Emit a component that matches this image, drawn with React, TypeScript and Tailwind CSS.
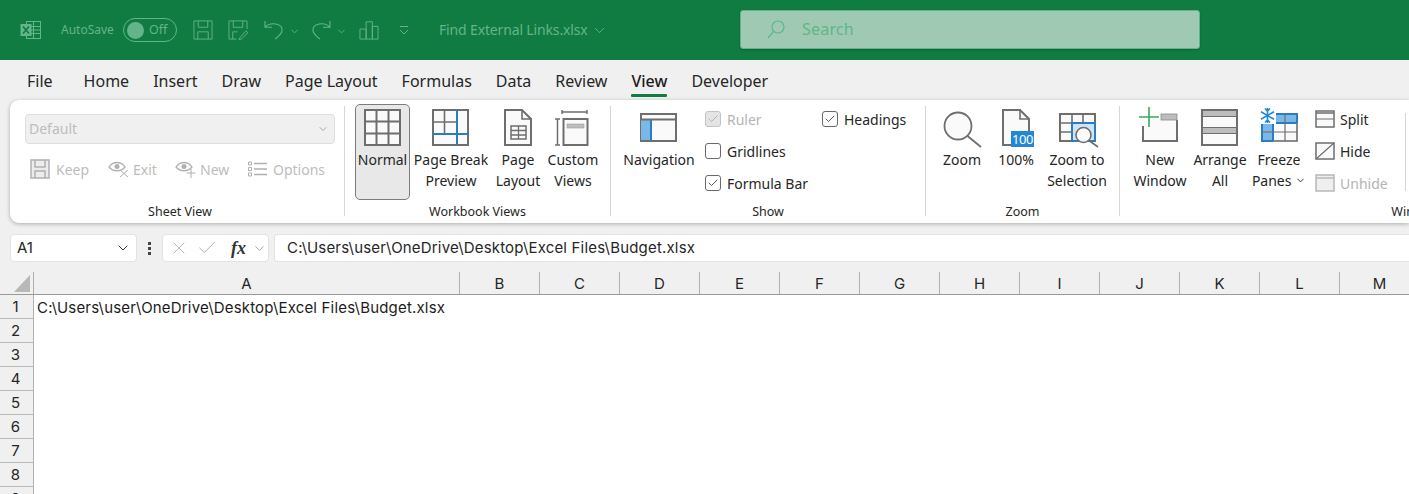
import React from "react";
import { ChevronDown, Check, X } from "lucide-react";

const G = "#6e6e6e";
const F = "#fafafa";
const B = "#2b7cc0";
const L = "#7ab8e8";
const T = "#63b48a";

function Ico({ children, w = 44, h = 44, vw, vh }: { children: React.ReactNode; w?: number; h?: number; vw?: number; vh?: number }) {
  return (
    <svg width={w} height={h} viewBox={`0 0 ${vw ?? w} ${vh ?? h}`} preserveAspectRatio="none" fill="none" className="block shrink-0">
      {children}
    </svg>
  );
}

function Large({ w, label, active, icon, mr }: { w: string; label: React.ReactNode; active?: boolean; icon: React.ReactNode; mr?: string }) {
  return (
    <div className={`${w} ${mr ?? ""} h-[96px] flex flex-col items-center shrink-0 rounded-[5px] ${active ? "bg-[#e8e8e8] border border-[#7c7c7c]" : ""}`}>
      <div className={`${active ? "h-[45px] pt-[1px]" : "h-[46px] pt-[2px]"} flex justify-center`}>{icon}</div>
      <div className="text-center text-[14px] leading-[20.5px] text-[#262626] whitespace-nowrap">{label}</div>
    </div>
  );
}

function Sep() {
  return <div className="w-px bg-[#d6d6d6] mt-[6px] mb-[7px] shrink-0" />;
}

function Group({ w, pl, label, children, lp }: { w: string; pl: string; label: string; children: React.ReactNode; lp?: string }) {
  return (
    <div className={`${w} shrink-0 flex flex-col`}>
      <div className={`h-[104px] pt-[4px] flex ${pl}`}>{children}</div>
      <div className={`text-center text-[12.5px] leading-[16px] text-[#262626] whitespace-nowrap ${lp ?? ""}`}>{label}</div>
    </div>
  );
}

function Box({ checked, disabled }: { checked?: boolean; disabled?: boolean }) {
  return (
    <div className={`w-[16px] h-[16px] rounded-[3px] border flex items-center justify-center ${disabled ? "bg-[#e4e4e4] border-[#c4c4c4]" : "bg-white border-[#6a6a6a]"}`}>
      {checked && <Check size={12} strokeWidth={1.6} color={disabled ? "#a8a8a8" : "#303030"} />}
    </div>
  );
}

function CheckRow({ label, checked, disabled }: { label: string; checked?: boolean; disabled?: boolean }) {
  return (
    <div className="h-[32px] flex items-center gap-[6px]">
      <Box checked={checked} disabled={disabled} />
      <span className={`text-[14px] whitespace-nowrap ${disabled ? "text-[#b4b4b4]" : "text-[#262626]"}`}>{label}</span>
    </div>
  );
}

function SmallRow({ label, icon, disabled }: { label: string; icon: React.ReactNode; disabled?: boolean }) {
  return (
    <div className="h-[32px] flex items-center gap-[5px]">
      {icon}
      <span className={`text-[14px] whitespace-nowrap ${disabled ? "text-[#b4b4b4]" : "text-[#262626]"}`}>{label}</span>
    </div>
  );
}

const tabs = ["Home", "Insert", "Draw", "Page Layout", "Formulas", "Data", "Review", "View", "Developer"];
const cols = ["B", "C", "D", "E", "F", "G", "H", "I", "J", "K", "L", "M"];
const rows = [1, 2, 3, 4, 5, 6, 7, 8, 9];
const SHEET = "C:\\Users\\user\\OneDrive\\Desktop\\Excel Files\\Budget.xlsx";

function TitleBar() {
  return (
    <div className="h-[60px] bg-[#107c41] flex items-center shrink-0 text-[#63b48a]">
      <div className="ml-[20px] w-[41px]">
        <Ico w={21} h={20}>
          <rect x="6.5" y="1.5" width="14" height="17" fill="none" stroke={T} />
          <path d="M6.5 6.5H20.5M6.5 10H20.5M6.5 13.5H20.5M13.5 1.5V18.5" stroke={T} />
          <rect x="0.5" y="4" width="11" height="12" fill="#63b48a" />
          <path d="M3 6.5L9 13.5M9 6.5L3 13.5" stroke="#107c41" strokeWidth="1.6" />
        </Ico>
      </div>
      <span className="text-[12px] w-[62px] whitespace-nowrap">AutoSave</span>
      <div className="w-[54px] h-[24px] rounded-full border border-[#63b48a] flex items-center pl-[3px] gap-[5px]">
        <div className="w-[17px] h-[17px] rounded-full bg-[#63b48a]" />
        <span className="text-[12.5px]">Off</span>
      </div>
      <div className="ml-[16px] flex items-center">
        <Ico w={20} h={20} vw={21} vh={22}>
          <path d="M1 1H20V21H1Z" stroke={T} />
          <path d="M5.5 1V8H15.5V1M5 21V13H16V21" stroke={T} />
        </Ico>
      </div>
      <div className="ml-[15px]">
        <Ico w={20} h={20} vw={21} vh={22}>
          <path d="M9 21H1V1H20V10" stroke={T} />
          <path d="M5.5 1V8H15.5V1M5 21V13H10" stroke={T} />
          <path d="M12 20L19 12L21 14L14 21L11.5 21.5Z" stroke={T} />
        </Ico>
      </div>
      <div className="ml-[16px]">
        <Ico w={20} h={20} vw={20} vh={22}>
          <path d="M1 1V8H8M1 8C6 2 19 3 18 12C17.5 16 14 18 11 21" stroke={T} strokeWidth="1.1" />
        </Ico>
      </div>
      <ChevronDown size={11} className="ml-[5px] mt-[2px]" />
      <div className="ml-[11px]">
        <Ico w={20} h={20} vw={20} vh={22}>
          <path d="M19 1V8H12M19 8C14 2 1 3 2 12C2.500 16 6 18 9 21" stroke={T} strokeWidth="1.1" />
        </Ico>
      </div>
      <ChevronDown size={11} className="ml-[5px] mt-[2px]" />
      <div className="ml-[12px]">
        <Ico w={20} h={20} vw={21} vh={22}>
          <path d="M1 21V10H7.500V21M7.500 21V2H14V21M14 21V7H20V21H1" stroke={T} />
        </Ico>
      </div>
      <div className="ml-[19px] w-[12px]">
        <Ico w={12} h={12}>
          <path d="M2 2.500H10M2 6L6 10L10 6" stroke={T} />
        </Ico>
      </div>
      <span className="ml-[29px] w-[148px] -mt-[2px] text-[14px] tracking-[-0.15px] whitespace-nowrap">Find External Links.xlsx</span>
      <ChevronDown size={17} className="ml-[4px]" strokeWidth={1.3} />
      <div className="ml-[132px] w-[460px] h-[39px] -mt-[2px] rounded-[3px] bg-[#a0c9b3] border border-[#5fb587] flex items-center pl-[26px] shadow-[0_1px_2px_rgba(0,0,0,0.2)]">
        <svg width="18" height="19" viewBox="0 0 18 19" fill="none" className="shrink-0">
          <circle cx="11" cy="7" r="6" stroke="#5cb886" strokeWidth="1.2" />
          <path d="M6.500 11.500L1 18" stroke="#5cb886" strokeWidth="1.2" />
        </svg>
        <span className="ml-[17px] text-[16px] text-[#5cb886] tracking-[0.2px]">Search</span>
      </div>
    </div>
  );
}

function Tabs() {
  return (
    <div className="h-[40px] flex items-start pl-[27px] shrink-0 text-[#262626]">
      <span className="text-[16px] leading-[42px] mr-[31px]">File</span>
      <div className="flex gap-[24px]">
        {tabs.map((t) => (
          <div key={t} className="relative h-[40px] whitespace-nowrap">
            <span className={`text-[16px] leading-[42px] ${t === "View" ? "font-medium text-[#1c1c1c]" : ""}`}>{t}</span>
            {t === "View" && <div className="absolute left-0 right-0 top-[34px] h-[3px] rounded-[1px] bg-[#107c41]" />}
          </div>
        ))}
      </div>
    </div>
  );
}

function Ribbon() {
  return (
    <div className="ml-[10px] h-[123px] bg-white rounded-l-[9px] shadow-[0_1px_4px_rgba(0,0,0,0.28)] flex shrink-0 overflow-hidden">
      <Group w="w-[334px]" pl="pl-[15px]" lp="pl-[6px]" label="Sheet View">
        <div className="w-[310px] pt-[10px] text-[#bdbdbd]">
          <div className="h-[30px] rounded-[4px] bg-[#f0f0f0] border border-[#dedede] flex items-center justify-between pl-[3px] pr-[5px]">
            <span className="text-[14px] leading-[28px]">Default</span>
            <ChevronDown size={12} color="#a8a8a8" />
          </div>
          <div className="flex items-center h-[30px] mt-[10px] pl-[5px] text-[14px]">
            <svg width="20" height="20" viewBox="0 0 20 20" fill="none" className="shrink-0">
              <path d="M1 1H19V19H1Z" fill="#ececec" stroke="#b0b0b0" strokeWidth="1.5" />
              <path d="M5 1V8H15V1M5 19V12H15V19" stroke="#b0b0b0" strokeWidth="1.5" />
            </svg>
            <span className="ml-[6px] w-[52px]">Keep</span>
            <svg width="21" height="18" viewBox="0 0 21 18" fill="none" className="shrink-0">
              <path d="M1 7C5 1 13 1 17 7C13 12 5 12 1 7Z" stroke="#b0b0b0" strokeWidth="1.3" />
              <circle cx="9" cy="6.500" r="2.500" fill="#b0b0b0" />
              <path d="M12 10L20 17M20 10L12 17" stroke="#b0b0b0" />
            </svg>
            <span className="ml-[4px] w-[42px]">Exit</span>
            <svg width="21" height="18" viewBox="0 0 21 18" fill="none" className="shrink-0">
              <path d="M1 7C5 1 13 1 17 7C13 12 5 12 1 7Z" stroke="#b0b0b0" strokeWidth="1.3" />
              <circle cx="9" cy="6.500" r="2.500" fill="#b0b0b0" />
              <path d="M16 9V18M11.500 13H20.500" stroke="#b0b0b0" />
            </svg>
            <span className="ml-[4px] w-[48px]">New</span>
            <svg width="19" height="16" viewBox="0 0 19 16" fill="none" className="shrink-0">
              <path d="M6 2.500H19M6 8H19M6 13.500H19" stroke="#b0b0b0" strokeWidth="1.3" />
              <path d="M0.500 1H3.500V4H0.500ZM0.500 6.500H3.500V9.500H0.500ZM0.500 12H3.500V15H0.500Z" stroke="#b0b0b0" />
            </svg>
            <span className="ml-[6px]">Options</span>
          </div>
        </div>
      </Group>
      <Sep />
      <Group w="w-[265px]" pl="pl-[10px]" label="Workbook Views">
        <Large w="w-[55px]" mr="mr-[2px]" active label="Normal" icon={
          <Ico>
            <rect x="4" y="4" width="35" height="35" fill={F} stroke={G} strokeWidth="2" />
            <path d="M15.500 4V39M27.500 4V39M4 15.500H39M4 27.500H39" stroke={G} strokeWidth="2" />
          </Ico>} />
        <Large w="w-[78px]" mr="mr-[2px]" label={<>Page Break<br />Preview</>} icon={
          <Ico>
            <rect x="4" y="4" width="35" height="35" fill={F} stroke={G} strokeWidth="2" />
            <path d="M15.500 4V28M4 16H28" stroke={G} strokeWidth="1.6" />
            <path d="M28 4V39M4 28H39" stroke={B} strokeWidth="2" />
          </Ico>} />
        <Large w="w-[52px]" mr="mr-[2px]" label={<>Page<br />Layout</>} icon={
          <Ico>
            <path d="M9 4H26L35 13V39H9Z" fill={F} stroke={G} strokeWidth="2" />
            <path d="M26 4V13H35" stroke={G} strokeWidth="1.6" />
            <rect x="15" y="20" width="15" height="13" stroke={G} strokeWidth="1.5" />
            <path d="M15 24.500H30M15 29H30M22.500 20V33" stroke={G} strokeWidth="1.3" />
          </Ico>} />
        <Large w="w-[54px]" label={<>Custom<br />Views</>} icon={
          <Ico>
            <path d="M11 8V4M11 6H36M36 8V4M4 13H9M6.500 13V39M4 39H9" stroke={G} strokeWidth="1.5" />
            <rect x="12.500" y="13" width="24" height="26" fill={F} stroke={G} strokeWidth="2" />
            <rect x="16" y="18" width="17" height="4" fill="#bdbdbd" stroke="#9b9b9b" strokeWidth="0.6" />
          </Ico>} />
      </Group>
      <Sep />
      <Group w="w-[314px]" pl="pl-[11px]" label="Show">
        <Large w="w-[74px]" label="Navigation" icon={
          <Ico>
            <rect x="4" y="8" width="35" height="27" fill={F} stroke={G} strokeWidth="2" />
            <rect x="4" y="13" width="10" height="22" fill={L} />
            <path d="M14 13V35" stroke={B} strokeWidth="2" />
            <path d="M4 13.500H39" stroke={G} strokeWidth="2" />
            <rect x="3" y="34" width="37" height="2" fill={G} />
          </Ico>} />
        <div className="ml-[9px] w-[117px] -mt-[1px]">
          <CheckRow label="Ruler" checked disabled />
          <CheckRow label="Gridlines" />
          <CheckRow label="Formula Bar" checked />
        </div>
        <div className="-mt-[1px]">
          <CheckRow label="Headings" checked />
        </div>
      </Group>
      <Sep />
      <Group w="w-[193px]" pl="pl-[11px]" label="Zoom">
        <Large w="w-[50px]" mr="mr-[4px]" label="Zoom" icon={
          <Ico>
            <circle cx="18" cy="20" r="13.500" fill={F} stroke={G} strokeWidth="1.8" />
            <path d="M27.500 30L41 41" stroke={G} strokeWidth="1.8" />
          </Ico>} />
        <Large w="w-[50px]" mr="mr-[2px]" label="100%" icon={
          <div className="relative w-[44px] h-[44px]">
            <Ico>
              <path d="M9 4H26L35 13V39H9Z" fill={F} stroke={G} strokeWidth="2" />
              <path d="M26 4V13H35" stroke={G} strokeWidth="1.6" />
            </Ico>
            <div className="absolute left-[17px] top-[25px] w-[23px] h-[16px] bg-[#2388d4] text-white text-[13px] leading-[16px] text-center tracking-[-0.5px]">100</div>
          </div>} />
        <Large w="w-[68px]" label={<>Zoom to<br />Selection</>} icon={
          <Ico>
            <rect x="5" y="8" width="35" height="27" fill={F} stroke={G} strokeWidth="2" />
            <path d="M17 8V35M28 8V17M5 17H40M5 26H17" stroke={G} strokeWidth="1.6" />
            <rect x="17" y="17" width="23" height="18" fill="#cfe4f5" stroke={B} strokeWidth="2" />
            <circle cx="28.500" cy="29" r="7.500" fill={F} stroke={G} strokeWidth="1.6" />
            <path d="M34 34.500L43 41" stroke={G} strokeWidth="1.6" />
          </Ico>} />
      </Group>
      <Sep />
      <Group w="w-[590px]" pl="pl-[10px]" label="Window">
        <Large w="w-[60px]" mr="mr-[2px]" label={<>New<br />Window</>} icon={
          <Ico>
            <path d="M18 14H5V35H39V14H33" fill={F} />
            <path d="M5 20V35H39V14" stroke={G} strokeWidth="2" />
            <rect x="23" y="8" width="16" height="6" fill="#bdbdbd" stroke="#8a8a8a" strokeWidth="0.8" />
            <path d="M11 1V21M1 11H21" stroke="#3ea860" strokeWidth="1.6" />
          </Ico>} />
        <Large w="w-[56px]" mr="mr-[4px]" label={<>Arrange<br />All</>} icon={
          <Ico>
            <rect x="4" y="4" width="35" height="35" fill={F} stroke={G} strokeWidth="2" />
            <rect x="5" y="5" width="33" height="5" fill="#bdbdbd" />
            <path d="M4 10.500H39" stroke={G} strokeWidth="1.2" />
            <rect x="5" y="22" width="33" height="5" fill="#bdbdbd" />
            <path d="M4 21.500H39M4 27.500H39" stroke={G} strokeWidth="1.2" />
          </Ico>} />
        <Large w="w-[54px]" label={<>Freeze<br />Panes <ChevronDown size={11} className="inline -mt-[2px]" /></>} icon={
          <Ico>
            <rect x="5" y="8" width="35" height="27" fill={F} stroke={G} strokeWidth="1.6" />
            <path d="M5 8H40V17H16V35H5Z" fill={L} />
            <path d="M28 8V35M5 26H40" stroke={G} strokeWidth="1.2" />
            <path d="M16 8V35M5 17H40M5 8H40V17M5 8V35H16" stroke={B} strokeWidth="2" />
            <rect x="2" y="1" width="17" height="17" fill="white" />
            <path d="M10.500 2V17M4 5.700L17 13.300M17 5.700L4 13.300M8 2.500L10.500 5L13 2.500M8 16.500L10.500 14L13 16.500" stroke="#2388d4" strokeWidth="1.6" />
          </Ico>} />
        <div className="ml-[9px] w-[90px] -mt-[1px]">
          <SmallRow label="Split" icon={
            <Ico w={20} h={18}>
              <rect x="1" y="1" width="18" height="16" fill={F} stroke={G} strokeWidth="1.5" />
              <path d="M1 3H19" stroke={G} strokeWidth="1.5" />
              <path d="M1 9H19" stroke={G} strokeWidth="1.2" />
            </Ico>} />
          <SmallRow label="Hide" icon={
            <Ico w={20} h={18}>
              <rect x="1" y="1" width="18" height="16" fill={F} stroke={G} strokeWidth="1.5" />
              <path d="M1 17L19 1" stroke={G} strokeWidth="1.2" />
            </Ico>} />
          <SmallRow label="Unhide" disabled icon={
            <Ico w={20} h={18}>
              <rect x="1" y="1" width="18" height="16" fill="#efefef" stroke="#b8b8b8" strokeWidth="1.5" />
              <path d="M1 4H19" stroke="#b8b8b8" strokeWidth="1.5" />
            </Ico>} />
        </div>
        <div className="w-px bg-[#d6d6d6] h-[78px] mt-[9px]" />
      </Group>
    </div>
  );
}

function FormulaBar() {
  return (
    <div className="mt-[11px] h-[28px] flex items-center pl-[10px] shrink-0">
      <div className="w-[127px] h-[28px] bg-white border border-[#e2e2e2] rounded-[4px] flex items-center justify-between pl-[6px] pr-[5px]">
        <span className="text-[15px] font-['Inter',sans-serif] text-[#262626]">A1</span>
        <ChevronDown size={16} color="#333" strokeWidth={1.5} />
      </div>
      <div className="w-[25px] flex flex-col items-center gap-[2px]">
        <span className="w-[3px] h-[3px] bg-[#444]" />
        <span className="w-[3px] h-[3px] bg-[#444]" />
        <span className="w-[3px] h-[3px] bg-[#444]" />
      </div>
      <div className="w-[107px] h-[28px] bg-white border border-[#e2e2e2] rounded-[4px] flex items-center pl-[6px]">
        <X size={20} strokeWidth={1} color="#a8a8a8" />
        <Check size={22} strokeWidth={1} color="#a8a8a8" className="ml-[7px]" />
        <span className="ml-[13px] font-['Liberation_Serif',serif] italic font-bold text-[18px] text-[#333] leading-none">fx</span>
        <ChevronDown size={15} strokeWidth={1.2} color="#888" className="ml-[6px]" />
      </div>
      <div className="ml-[5px] flex-1 h-[28px] bg-white border border-[#e2e2e2] rounded-l-[4px] border-r-0 flex items-center pl-[12px]">
        <span className="font-['Inter',sans-serif] text-[15px] tracking-[0.18px] text-[#262626] whitespace-nowrap">{SHEET}</span>
      </div>
    </div>
  );
}

function Sheet() {
  return (
    <div className="mt-[10px] flex-1 bg-white font-['Inter',sans-serif] text-[#262626] text-[15px] overflow-hidden">
      <div className="flex h-[23px] border-b border-[#9a9a9a] bg-[#f0f0f0]">
        <div className="w-[34px] border-r border-[#b0b0b0] relative shrink-0">
          <svg width="16" height="17" viewBox="0 0 16 17" className="absolute left-[14px] top-[3px]">
            <path d="M16 0V17H0Z" fill="#b8b8b8" />
          </svg>
        </div>
        <div className="w-[426px] shrink-0 text-center leading-[23px] border-r border-[#b0b0b0]">A</div>
        {cols.map((c) => (
          <div key={c} className="w-[80px] shrink-0 text-center leading-[23px] border-r border-[#b0b0b0]">{c}</div>
        ))}
      </div>
      <div className="flex">
        <div className="w-[34px] shrink-0 border-r border-[#b0b0b0] bg-[#f0f0f0]">
          {rows.map((r) => (
            <div key={r} className="h-[24px] text-center leading-[24px] border-b border-[#b8b8b8] pr-[2px]">{r}</div>
          ))}
        </div>
        <div className="pl-[3px] leading-[26px] tracking-[0.18px] whitespace-nowrap text-[#1c1c1c]">{SHEET}</div>
      </div>
    </div>
  );
}

export default function App() {
  return (
    <div className="w-[1409px] h-[494px] overflow-hidden bg-[#f0f0f0] flex flex-col font-['Noto_Sans',sans-serif]">
      <TitleBar />
      <Tabs />
      <Ribbon />
      <FormulaBar />
      <Sheet />
    </div>
  );
}
